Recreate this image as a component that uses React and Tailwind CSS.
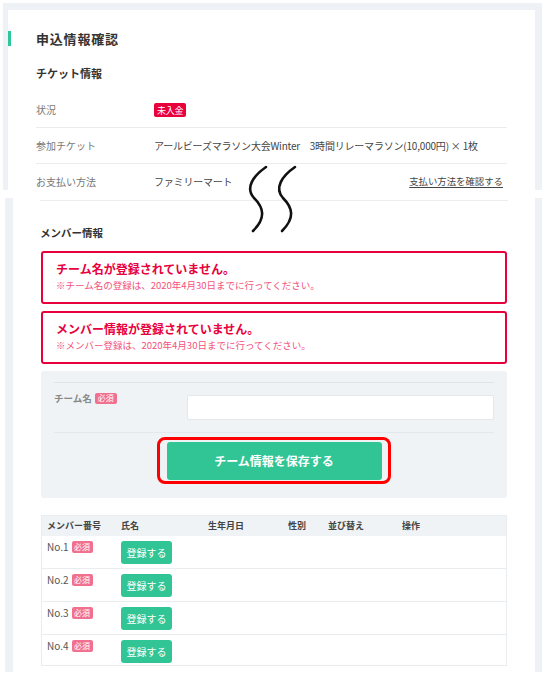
import React from "react"

const font = { fontFamily: '"Noto Sans CJK JP", "Noto Sans", sans-serif' }

function Required({ className = "" }) {
    return (
        <span className={"inline-flex items-center justify-center bg-[#f0708e] text-white text-[8px] leading-none rounded-[2px] " + className}>必須</span>
    )
}

function InfoRow({ label, children, right }) {
    return (
        <div className="flex items-center h-[36px] border-b border-[#e9edf0]">
            <div className="w-[118px] text-[10px] text-[#777]">{label}</div>
            <div className="flex-1 text-[10px] text-[#444] tracking-[-0.2px]">{children}</div>
            {right}
        </div>
    )
}

function ErrorBox({ title, note }) {
    return (
        <div className="h-[53px] border-2 border-[#e8003c] rounded-[3px] pl-[13px] pt-[8px]">
            <div className="text-[12px] leading-[15px] font-bold text-[#e8003c]">{title}</div>
            <div className="mt-[3px] text-[9.5px] leading-[12px] text-[#f2527c]">{note}</div>
        </div>
    )
}

function MemberRow({ no, last }) {
    return (
        <div className={"grid grid-cols-[79px_87px_80px_40px_74px_1fr] items-start pt-[5px] leading-none " + (last ? "h-[30px]" : "h-[33px] border-b border-[#e9edf0]")}>
            <div className="pl-[5px] flex items-center gap-[3px] text-[10px] leading-[12px] text-[#555]">
                <span>No.{no}</span>
                <Required className="w-[21px] h-[12px]" />
            </div>
            <div className="flex">
                <button className="block w-[51px] h-[23px] rounded-[3px] bg-[#31c596] text-white text-[10px]">登録する</button>
            </div>
        </div>
    )
}

export default function App() {
    return (
        <div style={font} className="relative w-[550px] h-[684px] bg-white overflow-hidden text-[#333]">
            {/* upper capture */}
            <div className="ml-[3px] mt-[3px] w-[539px] h-[187px] bg-[#eef2f6] pt-[7px] pl-[5px] pr-[7px]">
                <div className="h-full bg-white overflow-hidden">
                    <div className="mt-[21px] h-[15px] flex items-center">
                        <div className="w-[3px] h-[15px] bg-[#2ec79b]" />
                        <div className="ml-[25px] text-[13px] leading-[15px] font-bold tracking-[0.8px] text-[#333]">申込情報確認</div>
                    </div>
                    <div className="px-[28px]">
                        <div className="mt-[20px] text-[11px] leading-[14px] font-bold text-[#333]">チケット情報</div>
                        <div className="mt-[12px]">
                            <InfoRow label="状況">
                                <span className="inline-flex items-center h-[14px] px-[3px] rounded-[2px] bg-[#e8003c] text-white text-[9px]">未入金</span>
                            </InfoRow>
                            <InfoRow label="参加チケット">
                                アールビーズマラソン大会Winter　3時間リレーマラソン(10,000円) × 1枚
                            </InfoRow>
                            <InfoRow
                                label="お支払い方法"
                                right={<a className="mr-[4px] text-[9.4px] text-[#444] underline underline-offset-2">支払い方法を確認する</a>}
                            >
                                ファミリーマート
                            </InfoRow>
                        </div>
                    </div>
                </div>
            </div>

            {/* lower capture */}
            <div className="ml-[5px] mt-[8px] w-[537px] h-[474px] bg-[#eef2f6] pl-[8px] pr-[7px]">
                <div className="h-full bg-white px-[27px]">
                    <div className="pt-[2px] border-b border-[#eceff2]" />
                    <div className="mt-[25px] text-[10.5px] leading-[14px] font-bold text-[#333]">メンバー情報</div>
                    <div className="mt-[11px] mx-[1px]">
                        <ErrorBox
                            title="チーム名が登録されていません。"
                            note="※チーム名の登録は、2020年4月30日までに行ってください。"
                        />
                        <div className="mt-[7px]">
                            <ErrorBox
                                title="メンバー情報が登録されていません。"
                                note="※メンバー登録は、2020年4月30日までに行ってください。"
                            />
                        </div>
                        <div className="mt-[7px] h-[127px] bg-[#eff3f6] rounded-[3px] px-[13px] pt-[11px]">
                            <div className="border-t border-[#dfe4e9] flex h-[50px]">
                                <div className="w-[133px] mt-[9px] flex items-center gap-[3px] h-[12px]">
                                    <span className="text-[9.5px] font-bold text-[#888]">チーム名</span>
                                    <Required className="w-[22px] h-[11px]" />
                                </div>
                                <div className="flex-1 mt-[12px] h-[25px] bg-white border border-[#e3e8ec] rounded-[2px]" />
                            </div>
                            <div className="border-t border-[#e3e8ec] flex justify-center pt-[4px]">
                                <div className="w-[234px] h-[47px] border-[3px] border-[#ff0000] rounded-[8px] flex items-center justify-center">
                                    <button className="block w-[215px] h-[38px] rounded-[3px] bg-[#31c596] text-white text-[12px] font-bold">チーム情報を保存する</button>
                                </div>
                            </div>
                        </div>

                        <div className="mt-[17px] border border-[#e9edf0]">
                            <div className="grid grid-cols-[79px_87px_80px_40px_74px_1fr] items-center h-[20px] bg-[#eff3f6] text-[9px] font-bold text-[#444]">
                                <div className="pl-[5px]">メンバー番号</div>
                                <div>氏名</div>
                                <div>生年月日</div>
                                <div>性別</div>
                                <div>並び替え</div>
                                <div>操作</div>
                            </div>
                            <MemberRow no={1} />
                            <MemberRow no={2} />
                            <MemberRow no={3} />
                            <MemberRow no={4} last />
                        </div>
                    </div>
                </div>
            </div>

            {/* break marks */}
            <svg className="absolute left-0 top-0" width="550" height="684" fill="none" stroke="#111" strokeWidth="2.6" strokeLinecap="round">
                <path d="M266 167 C253 176 245 188 254 198 C264 208 266 218 253 231" />
                <path d="M295 167 C282 176 274 188 283 198 C293 208 295 218 282 231" />
            </svg>
        </div>
    )
}
